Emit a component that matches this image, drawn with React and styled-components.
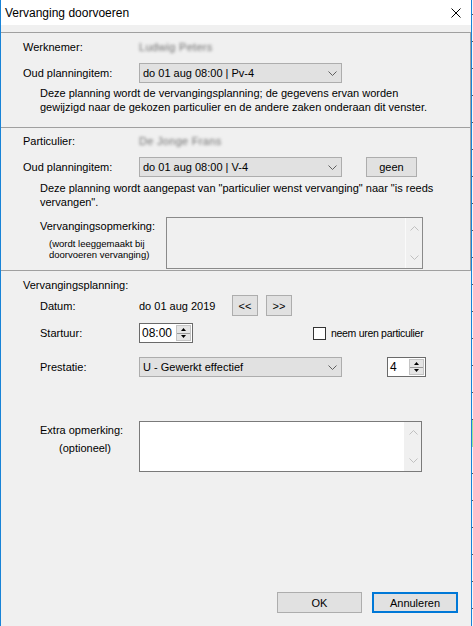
import React from "react";
import styled, { createGlobalStyle } from "styled-components";

const GlobalStyle = createGlobalStyle`
  html, body {
    margin: 0;
    padding: 0;
    background: #ffffff;
  }
  body {
    font-family: "Liberation Sans", Arial, sans-serif;
    font-size: 11px;
    color: #000000;
  }
  * {
    box-sizing: border-box;
  }
`;

const Screen = styled.div`
  display: flex;
  width: 473px;
  height: 626px;
  overflow: hidden;
`;

const Window = styled.div`
  width: 472px;
  height: 626px;
  flex: none;
  display: flex;
  flex-direction: column;
  background: #f0f0f0;
  border-left: 1px solid #1883d7;
  border-right: 1px solid #1883d7;
`;

// sliver of whatever sits behind the dialog
const Backdrop = styled.div`
  flex: 1;
  background:
    linear-gradient(to bottom, transparent 420px, #9be79b 420px, #9be79b 447px, transparent 447px),
    repeating-linear-gradient(to bottom, #f7f7f7 0 14px, #555555 14px 15px, #f7f7f7 15px 27px);
`;

const TitleBar = styled.div`
  height: 25px;
  flex: none;
  background: #ffffff;
  display: flex;
  align-items: center;
  justify-content: space-between;
  padding: 0 10px 0 4px;
  font-size: 12px;
`;

const CloseIcon = () => (
  <svg width="10" height="10" viewBox="0 0 10 10">
    <path d="M0.5 0.5 L9.5 9.5 M9.5 0.5 L0.5 9.5" stroke="#000" strokeWidth="1" fill="none" />
  </svg>
);

const Body = styled.div`
  flex: 1;
  display: flex;
  flex-direction: column;
  padding-top: 7px;
`;

const Section = styled.section`
  flex: ${(p) => (p.$grow ? "1" : "none")};
  height: ${(p) => (p.$h ? `${p.$h}px` : "auto")};
  display: flex;
  flex-direction: column;
  border-top: 1px solid #a0a0a0;
  border-right: ${(p) => (p.$edge ? "1px solid #a0a0a0" : "none")};
  padding: ${(p) => p.$pad}px 0 0 22px;
`;

const Row = styled.div`
  display: flex;
  align-items: ${(p) => (p.$top ? "flex-start" : "center")};
  height: ${(p) => (p.$h ? `${p.$h}px` : "auto")};
  margin-top: ${(p) => p.$mt || 0}px;
  padding-left: ${(p) => p.$indent || 0}px;
`;

const Label = styled.div`
  width: ${(p) => p.$w}px;
  flex: none;
  white-space: nowrap;
  line-height: 14px;
  padding-top: ${(p) => p.$pt || 0}px;
`;

const SubNote = styled.div`
  padding-left: ${(p) => p.$indent || 0}px;
  margin-top: ${(p) => p.$mt || 0}px;
  line-height: ${(p) => p.$lh || 11}px;
  font-size: ${(p) => p.$size || 9.5}px;
`;

const Hidden = styled.span`
  color: #6d6d6d;
  filter: blur(1.4px);
  white-space: nowrap;
  letter-spacing: 0.3px;
`;

const Description = styled.div`
  line-height: 14px;
  padding-left: 17px;
  margin-top: ${(p) => p.$mt || 0}px;
  white-space: nowrap;
`;

const Combo = styled.div`
  width: 203px;
  height: 20px;
  flex: none;
  display: flex;
  align-items: center;
  justify-content: space-between;
  padding: 0 4px 0 3px;
  background: #e1e1e1;
  border: 1px solid #adadad;
`;

const Chevron = ({ color = "#5f5f5f", up }) => (
  <svg width="9" height="5" viewBox="0 0 9 5">
    <path
      d={up ? "M0.5 4.5 L4.5 0.5 L8.5 4.5" : "M0.5 0.5 L4.5 4.5 L8.5 0.5"}
      stroke={color}
      strokeWidth="1"
      fill="none"
    />
  </svg>
);

const PushButton = styled.button`
  width: ${(p) => p.$w}px;
  height: ${(p) => p.$h || 21}px;
  margin-left: ${(p) => p.$ml || 0}px;
  flex: none;
  padding: 0;
  font-family: "Liberation Sans", Arial, sans-serif;
  font-size: 11px;
  color: #000000;
  background: #e1e1e1;
  border: ${(p) => (p.$focus ? "2px solid #0078d7" : "1px solid #adadad")};
  display: flex;
  align-items: center;
  justify-content: center;
`;

const Memo = styled.div`
  width: ${(p) => p.$w}px;
  height: ${(p) => p.$h}px;
  flex: none;
  display: flex;
  justify-content: flex-end;
  background: ${(p) => (p.$disabled ? "#f0f0f0" : "#ffffff")};
  border: 1px solid ${(p) => (p.$disabled ? "#8a8a8a" : "#7a7a7a")};
`;

const ScrollTrack = styled.div`
  width: 17px;
  height: 100%;
  display: flex;
  flex-direction: column;
  align-items: center;
  justify-content: space-between;
  padding: 8px 0 8px;
  background: #f0f0f0;
  border-left: 1px solid ${(p) => (p.$disabled ? "#fafafa" : "#f0f0f0")};
`;

const Numeric = styled.div`
  width: ${(p) => p.$w}px;
  height: 20px;
  margin-left: ${(p) => p.$ml || 0}px;
  flex: none;
  display: flex;
  align-items: center;
  justify-content: space-between;
  padding: 0 1px 0 2px;
  background: #ffffff;
  border: 1px solid #6a6a6a;
  font-size: 12px;
`;

const Spinner = styled.div`
  width: 15px;
  height: 16px;
  display: flex;
  flex-direction: column;
  background: #e5e5e5;
  border: 1px solid #c4c4c4;
`;

const SpinHalf = styled.div`
  flex: 1;
  display: flex;
  align-items: center;
  justify-content: center;
  border-top: ${(p) => (p.$lower ? "1px solid #9a9a9a" : "none")};
`;

const Tri = ({ up }) => (
  <svg width="5" height="3" viewBox="0 0 5 3">
    <path d={up ? "M0 3 L2.5 0 L5 3 Z" : "M0 0 L2.5 3 L5 0 Z"} fill="#000" />
  </svg>
);

const CheckBox = styled.span`
  width: 13px;
  height: 13px;
  flex: none;
  margin-left: ${(p) => p.$ml || 0}px;
  margin-right: 5px;
  background: #ffffff;
  border: 1px solid #333333;
`;

const CheckLabel = styled.span`
  font-size: 10.5px;
  letter-spacing: -0.3px;
  white-space: nowrap;
`;

const Footer = styled.div`
  margin-top: auto;
  display: flex;
  justify-content: flex-end;
  gap: 10px;
  padding: 0 13px 13px 0;
`;

const SpinBox = ({ value, w, ml }) => (
  <Numeric $w={w} $ml={ml}>
    <span>{value}</span>
    <Spinner>
      <SpinHalf>
        <Tri up />
      </SpinHalf>
      <SpinHalf $lower>
        <Tri />
      </SpinHalf>
    </Spinner>
  </Numeric>
);

const TextMemo = ({ w, h, disabled }) => (
  <Memo $w={w} $h={h} $disabled={disabled}>
    <ScrollTrack $disabled={disabled}>
      <Chevron up color="#c0c0c0" />
      <Chevron color="#c0c0c0" />
    </ScrollTrack>
  </Memo>
);

export default function App() {
  return (
    <Screen>
      <GlobalStyle />
      <Window>
        <TitleBar>
          <span>Vervanging doorvoeren</span>
          <CloseIcon />
        </TitleBar>

        <Body>
          <Section $h={95} $pad={4} $edge>
            <Row $h={20}>
              <Label $w={116}>Werknemer:</Label>
              <Hidden>Ludwig Peters</Hidden>
            </Row>
            <Row $h={20} $mt={6}>
              <Label $w={116}>Oud planningitem:</Label>
              <Combo>
                <span>do 01 aug 08:00 | Pv-4</span>
                <Chevron />
              </Combo>
            </Row>
            <Description $mt={3}>
              Deze planning wordt de vervangingsplanning; de gegevens ervan worden
              <br />
              gewijzigd naar de gekozen particulier en de andere zaken onderaan dit venster.
            </Description>
          </Section>

          <Section $h={143} $pad={3} $edge>
            <Row $h={20}>
              <Label $w={116}>Particulier:</Label>
              <Hidden>De Jonge Frans</Hidden>
            </Row>
            <Row $h={20} $mt={6}>
              <Label $w={116}>Oud planningitem:</Label>
              <Combo>
                <span>do 01 aug 08:00 | V-4</span>
                <Chevron />
              </Combo>
              <PushButton $w={51} $h={20} $ml={24}>
                geen
              </PushButton>
            </Row>
            <Description $mt={4}>
              Deze planning wordt aangepast van "particulier wenst vervanging" naar "is reeds
              <br />
              vervangen".
            </Description>
            <Row $top $mt={8} $indent={17}>
              <Label $w={126} $pt={2}>
                Vervangingsopmerking:
                <SubNote $indent={9} $mt={5}>
                  (wordt leeggemaakt bij
                  <br />
                  doorvoeren vervanging)
                </SubNote>
              </Label>
              <TextMemo w={257} h={52} disabled />
            </Row>
          </Section>

          <Section $grow $pad={4}>
            <Row $h={20}>
              <Label $w={116}>Vervangingsplanning:</Label>
            </Row>
            <Row $h={21} $indent={17}>
              <Label $w={99}>Datum:</Label>
              <Label $w={93}>do 01 aug 2019</Label>
              <PushButton $w={26}>&lt;&lt;</PushButton>
              <PushButton $w={26} $ml={8}>
                &gt;&gt;
              </PushButton>
            </Row>
            <Row $h={20} $mt={7} $indent={17}>
              <Label $w={99}>Startuur:</Label>
              <SpinBox value="08:00" w={54} />
              <CheckBox $ml={120} />
              <CheckLabel>neem uren particulier</CheckLabel>
            </Row>
            <Row $h={20} $mt={14} $indent={17}>
              <Label $w={99}>Prestatie:</Label>
              <Combo>
                <span>U - Gewerkt effectief</span>
                <Chevron />
              </Combo>
              <SpinBox value="4" w={39} ml={45} />
            </Row>
            <Row $top $mt={44} $indent={17}>
              <Label $w={99} $pt={2}>
                Extra opmerking:
                <SubNote $indent={19} $mt={4} $lh={14} $size={11}>
                  (optioneel)
                </SubNote>
              </Label>
              <TextMemo w={283} h={51} />
            </Row>

            <Footer>
              <PushButton $w={85}>OK</PushButton>
              <PushButton $w={86} $focus>
                Annuleren
              </PushButton>
            </Footer>
          </Section>
        </Body>
      </Window>
      <Backdrop />
    </Screen>
  );
}
